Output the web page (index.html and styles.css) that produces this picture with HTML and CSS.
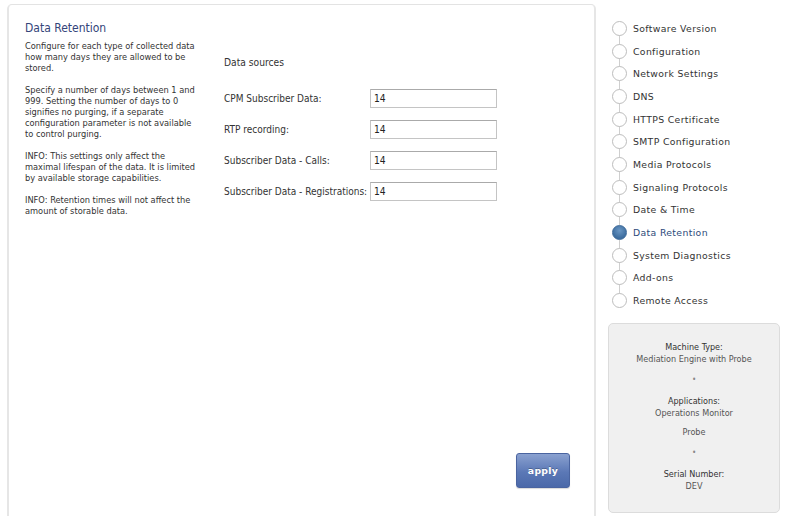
FILE: index.html
```html
<!DOCTYPE html>
<html>
<head>
<meta charset="utf-8">
<link rel="stylesheet" href="styles.css">
</head>
<body>
<div class="page">
  <main class="panel">
    <section class="intro">
      <h1 class="title">Data Retention</h1>
      <p>Configure for each type of collected data how many days they are allowed to be stored.</p>
      <p>Specify a number of days between 1 and 999. Setting the number of days to 0 signifies no purging, if a separate configuration parameter is not available to control purging.</p>
      <p>INFO: This settings only affect the maximal lifespan of the data. It is limited by available storage capabilities.</p>
      <p>INFO: Retention times will not affect the amount of storable data.</p>
    </section>
    <section class="form">
      <div class="form-title">Data sources</div>
      <div class="row"><label>CPM Subscriber Data:</label><input type="text" value="14"></div>
      <div class="row"><label>RTP recording:</label><input type="text" value="14"></div>
      <div class="row"><label>Subscriber Data - Calls:</label><input type="text" value="14"></div>
      <div class="row"><label>Subscriber Data - Registrations:</label><input type="text" value="14" class="focus"></div>
    </section>
    <div class="actions"><button class="apply">apply</button></div>
  </main>
  <aside class="side">
    <ul class="steps">
      <li><span class="dot"></span>Software Version</li>
      <li><span class="dot"></span>Configuration</li>
      <li><span class="dot"></span>Network Settings</li>
      <li><span class="dot"></span>DNS</li>
      <li><span class="dot"></span>HTTPS Certificate</li>
      <li><span class="dot"></span>SMTP Configuration</li>
      <li><span class="dot"></span>Media Protocols</li>
      <li><span class="dot"></span>Signaling Protocols</li>
      <li><span class="dot"></span>Date &amp; Time</li>
      <li class="active"><span class="dot"></span>Data Retention</li>
      <li><span class="dot"></span>System Diagnostics</li>
      <li><span class="dot"></span>Add-ons</li>
      <li class="last"><span class="dot"></span>Remote Access</li>
    </ul>
    <div class="info">
      <div class="k">Machine Type:</div>
      <div class="v">Mediation Engine with Probe</div>
      <div class="sep">•</div>
      <div class="k">Applications:</div>
      <div class="v">Operations Monitor</div>
      <div class="v v2">Probe</div>
      <div class="sep">•</div>
      <div class="k">Serial Number:</div>
      <div class="v">DEV</div>
    </div>
  </aside>
</div>
</body>
</html>
```
FILE: styles.css
```css
html, body {
  margin: 0;
  padding: 0;
  background: #fff;
  overflow: hidden;
}
body {
  font-family: Tahoma, "DejaVu Sans Condensed", "Liberation Sans", sans-serif;
  color: #333;
}
.page {
  display: flex;
  width: 786px;
  height: 516px;
  overflow: hidden;
}
.panel {
  box-sizing: border-box;
  margin: 4px 0 0 7px;
  width: 589px;
  height: 540px;
  border: 1px solid #e3e3e3;
  border-left: 2px solid #e6e6e6;
  border-right: 2px solid #e6e6e6;
  border-radius: 5px;
  display: grid;
  grid-template-columns: 199px 1fr;
  grid-template-rows: auto 1fr;
}
.intro {
  padding: 16px 9px 0 16px;
}
.title {
  margin: 0 0 5px;
  font-size: 12px;
  font-weight: normal;
  color: #34457a;
  line-height: 14px;
}
.intro p {
  margin: 0 0 11px;
  font-size: 9.2px;
  line-height: 11px;
  color: #333;
}
.form {
  padding: 53px 0 0 16px;
}
.form-title {
  font-size: 10.2px;
  line-height: 12px;
  margin-bottom: 19px;
  margin-top: -1px;
}
.row {
  display: flex;
  align-items: center;
  height: 20px;
  margin-bottom: 11px;
}
.row label {
  flex: none;
  width: 146px;
  white-space: nowrap;
  font-size: 10px;
  color: #333;
}
.row input {
  box-sizing: border-box;
  width: 127px;
  height: 19px;
  border: 1px solid #c4c4c4;
  border-top-color: #aaa;
  padding: 1px 3px;
  font-family: Tahoma, "DejaVu Sans Condensed", "Liberation Sans", sans-serif;
  font-size: 10.2px;
  color: #222;
  outline: none;
  background: #fff;
}
.actions {
  grid-column: 2;
  display: flex;
  justify-content: flex-end;
  align-items: flex-start;
  padding: 226px 24px 0 0;
}
.apply {
  width: 54px;
  height: 35px;
  border: 1px solid #4a64a0;
  border-radius: 3px;
  background: linear-gradient(#8aa1d0, #5b78b6 55%, #4b69a9);
  color: #fff;
  font-family: "DejaVu Sans", sans-serif;
  font-weight: bold;
  font-size: 9.3px;
  letter-spacing: 0.3px;
  text-shadow: 0 -1px 0 rgba(0,0,0,0.25);
  box-shadow: 0 1px 1px rgba(0,0,0,0.15);
  padding: 0;
}
.side {
  flex: 1;
  padding: 0 6px 0 16px;
}
.steps {
  list-style: none;
  margin: 17px 0 0;
  padding: 0;
}
.steps li {
  position: relative;
  display: flex;
  align-items: center;
  height: 22.7px;
  font-family: "DejaVu Sans", sans-serif;
  font-size: 9.3px;
  letter-spacing: 0.35px;
  color: #333;
}
.steps li::after {
  content: "";
  position: absolute;
  left: 7px;
  top: 15px;
  height: 16px;
  width: 1px;
  background: #cfcfcf;
}
.steps li.last::after { display: none; }
.dot {
  box-sizing: border-box;
  width: 15px;
  height: 15px;
  border: 1px solid #bdbdbd;
  border-radius: 50%;
  background: #fff;
  margin-right: 6px;
  flex: none;
  position: relative;
  z-index: 1;
}
.active { color: #2e4a7a !important; }
.active .dot {
  border-color: #3d6a9a;
  background: radial-gradient(circle at 50% 35%, #6a97c4, #3d6d9f 70%);
}
.info {
  box-sizing: border-box;
  margin: 11px 0 0 -4px;
  width: 172px;
  height: 190px;
  background: #f0f0f0;
  border: 1px solid #dcdcdc;
  border-radius: 5px;
  text-align: center;
  padding-top: 17px;
  font-size: 9px;
  line-height: 12px;
}
.info .k { color: #333; }
.info .v { color: #555; }
.info .v2 { margin-top: 7px; }
.info .sep {
  font-size: 8px;
  color: #888;
  line-height: 12px;
  margin: 9px 0 9px;
}
```
